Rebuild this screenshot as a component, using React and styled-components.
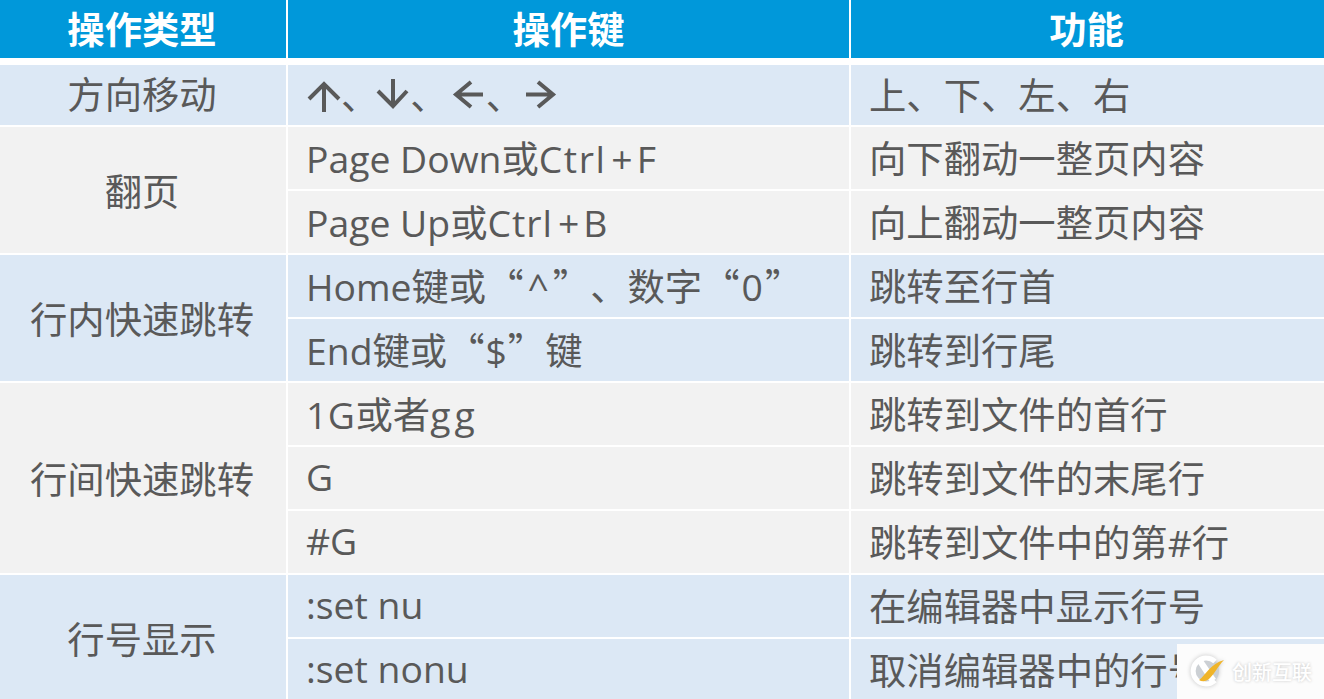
import styled, { createGlobalStyle } from "styled-components";

const Global = createGlobalStyle`
    html, body {
        margin: 0;
        padding: 0;
        width: 1324px;
        height: 699px;
        overflow: hidden;
        background: #ffffff;
    }
`

const tones = { blue: "#dce8f5", gray: "#f2f2f2" };

const Table = styled.div`
    display: grid;
    grid-template-columns: 286px 561px 473px;
    grid-template-rows: 63px 60px repeat(9, 62px);
    column-gap: 2px;
    row-gap: 2px;
    width: 1324px;
    height: 699px;
    overflow: hidden;
    font-family: "Open Sans", "Noto Sans CJK SC", sans-serif;
    font-size: 37.33px;
    color: #595959;
    text-spacing-trim: space-all;
`

const Head = styled.div`
    display: flex;
    align-items: center;
    justify-content: center;
    margin-bottom: 5px;
    padding-bottom: 2px;
    padding-right: ${(p) => p.nudge || 0}px;
    background: #0098da;
    color: #ffffff;
    font-weight: 700;
`

const Row = styled.div`
    display: contents;
`

const GroupCell = styled.div`
    grid-row: span ${(p) => p.span};
    grid-column: 1;
    display: flex;
    align-items: center;
    justify-content: center;
    padding: 0 2px ${(p) => (p.span > 1 ? 1 : 4)}px 0;
    background: ${(p) => tones[p.tone]};
`

const Cell = styled.div`
    display: flex;
    align-items: center;
    padding: 0 0 3px 18px;
    white-space: pre;
    background: ${(p) => tones[p.tone]};
`

const Cjk = styled.span`
    font-family: "Noto Sans CJK SC", sans-serif;
`

const ArrowRow = styled.span`
    display: flex;
    align-items: center;
    margin-left: 1px;
`

const ArrowSvg = styled.svg`
    flex: none;
    width: 34px;
    height: 38px;
    fill: none;
    stroke: #595959;
    stroke-width: 4;
`

const Comma = styled.span`
    font-family: "Noto Sans CJK SC", sans-serif;
    margin-right: ${(p) => p.after}px;
`

const Spread = styled.span`
    letter-spacing: ${(p) => p.by}px;
`

const Plus = styled.span`
    margin: 0 4px 0 5px;
`

const Quoted = styled.span`
    margin: 0 ${(p) => p.by}px;
`

const Watermark = styled.div`
    position: absolute;
    left: 1177px;
    top: 644px;
    width: 147px;
    height: 55px;
    display: flex;
    align-items: center;
    padding-left: 9px;
    box-sizing: border-box;
    background: #fcfcfc;
`

const Logo = styled.svg`
    flex: none;
    width: 46px;
    height: 40px;
    filter: drop-shadow(0 0 2px #c4c4c4);
`

const Brand = styled.span`
    font-family: "Noto Sans CJK SC", sans-serif;
    font-size: 20px;
    font-weight: 500;
    color: #ffffff;
    text-shadow: 0 0 3px #c4c4c4;
`

const arrowPaths = {
    up: "M17 37V9M2 24L17 9L32 24",
    down: "M17 4V31M2 16L17 31L31 16",
    left: "M31 19.5H4M19 7L4 19.5L19 32",
    right: "M2 19.5H29M14 7L29 19.5L14 32",
};

function Arrow({ dir }) {
    return <ArrowSvg viewBox="0 0 34 38"><path d={arrowPaths[dir]} /></ArrowSvg>;
}

const rows = [
    {
        group: "方向移动", span: 1, tone: "blue", items: [[
            <ArrowRow>
                <Arrow dir="up" /><Comma after={-2}>、</Comma>
                <Arrow dir="down" /><Comma after={4}>、</Comma>
                <Arrow dir="left" /><Comma after={1}>、</Comma>
                <Arrow dir="right" />
            </ArrowRow>,
            "上、下、左、右",
        ]]
    },
    {
        group: "翻页", span: 2, tone: "gray", items: [
            [<>Page Down或<Spread by={1.5}>Ctrl</Spread><Plus>+</Plus>F</>, "向下翻动一整页内容"],
            [<>Page Up或<Spread by={1}>Ctrl</Spread><Plus>+</Plus>B</>, "向上翻动一整页内容"],
        ]
    },
    {
        group: "行内快速跳转", span: 2, tone: "blue", items: [
            [<>Home键或<Cjk>“</Cjk><Quoted by={4}>^</Quoted><Cjk>”</Cjk><Cjk>、</Cjk>数字<Cjk>“</Cjk><Quoted by={2}>0</Quoted><Cjk>”</Cjk></>, "跳转至行首"],
            [<>End键或<Cjk>“</Cjk><Quoted by={1}>$</Quoted><Cjk>”</Cjk>键</>, "跳转到行尾"],
        ]
    },
    {
        group: "行间快速跳转", span: 3, tone: "gray", items: [
            [<><Spread by={0.5}>1G</Spread>或者<Spread by={4}>gg</Spread></>, "跳转到文件的首行"],
            ["G", "跳转到文件的末尾行"],
            ["#G", "跳转到文件中的第#行"],
        ]
    },
    {
        group: "行号显示", span: 2, tone: "blue", items: [
            [":set nu", "在编辑器中显示行号"],
            [":set nonu", "取消编辑器中的行号"],
        ]
    },
];

export default function App() {
    return (
        <>
            <Global />
            <Table>
                <Head nudge={2}>操作类型</Head>
                <Head>操作键</Head>
                <Head nudge={2}>功能</Head>
                {rows.map((r) => r.items.map((item, i) => (
                    <Row key={r.group + i}>
                        {i === 0 && <GroupCell tone={r.tone} span={r.span}>{r.group}</GroupCell>}
                        <Cell tone={r.tone}><span>{item[0]}</span></Cell>
                        <Cell tone={r.tone}><span>{item[1]}</span></Cell>
                    </Row>
                )))}
            </Table>
            <Watermark>
                <Logo viewBox="0 0 46 40">
                    <circle cx="19" cy="19" r="14" fill="#ccd0d4" />
                    <path d="M29 9.5A13 13 0 1 0 29 28.5" fill="none" stroke="#ffffff" strokeWidth="5" />
                    <path d="M11 10L17 8L30 27L24 30Z" fill="#ffffff" />
                    <path d="M13 28C19 24 24 12 38 8C32 14 29 21 24 26C20 30 16 30 13 28Z" fill="#f0b429" />
                </Logo>
                <Brand>创新互联</Brand>
            </Watermark>
        </>
    )
}
